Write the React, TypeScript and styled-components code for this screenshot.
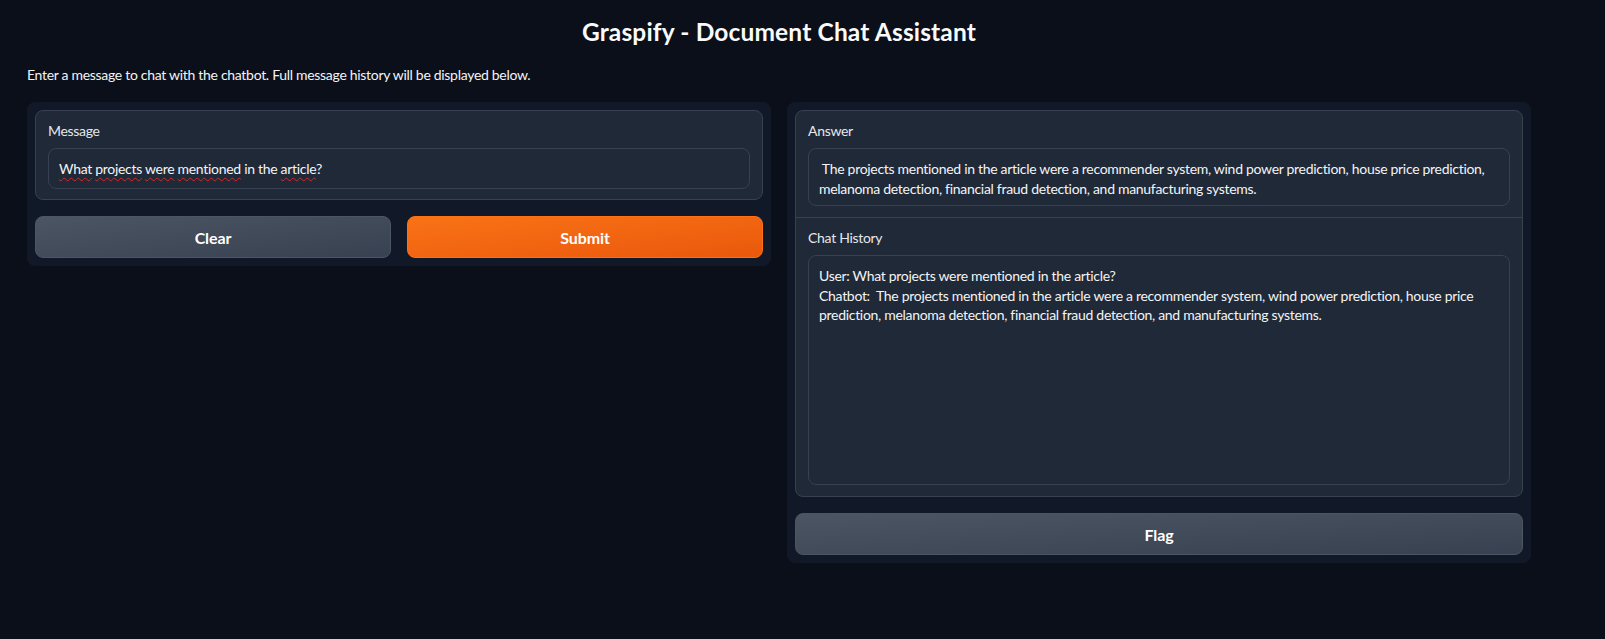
import React from "react";
import styled, { createGlobalStyle } from "styled-components";

const GlobalStyle = createGlobalStyle`
  *, *::before, *::after { box-sizing: border-box; }
  html, body { margin: 0; padding: 0; background: #0b0f19; }
  body {
    font-family: "Lato", "Liberation Sans", sans-serif;
    color: #f3f4f6;
    letter-spacing: -0.3px;
    -webkit-font-smoothing: antialiased;
  }
`;

const Page = styled.div`
  width: 1504px;
  margin-left: 27px;
  padding-top: 15px;
`;

const Title = styled.h1`
  margin: 0;
  font-size: 24.5px;
  font-weight: 700;
  line-height: 33px;
  letter-spacing: 0.15px;
  text-align: center;
  color: #f9fafb;
`;

const Description = styled.p`
  margin: 17px 0 0;
  font-size: 14px;
  line-height: 20px;
  color: #f3f4f6;
`;

const Row = styled.div`
  margin-top: 17px;
  display: flex;
  gap: 16px;
  align-items: flex-start;
`;

const Panel = styled.div`
  flex: 1 1 0;
  min-width: 0;
  background: #111827;
  border-radius: 8px;
  padding: 8px;
  display: flex;
  flex-direction: column;
  gap: 16px;
`;

const Box = styled.div`
  background: #1f2937;
  border: 1px solid #374151;
  border-radius: 8px;
`;

const Section = styled.div<{ $pb?: number }>`
  padding: 10px 12px ${(p) => p.$pb ?? 10}px;
  & + & {
    border-top: 1px solid #374151;
  }
`;

const Label = styled.div`
  font-size: 14px;
  line-height: 20px;
  color: #e5e7eb;
  margin-bottom: 7px;
`;

const Field = styled.div<{ $h: number }>`
  height: ${(p) => p.$h}px;
  background: #1f2937;
  border: 1px solid #374151;
  border-radius: 8px;
  padding: 10px;
  font-size: 14px;
  line-height: 19.6px;
  color: #f3f4f6;
  white-space: pre;
  overflow: hidden;
`;

const Misspelled = styled.span`
  text-decoration: underline wavy #dc2626;
  text-decoration-thickness: 1px;
  text-underline-offset: 3px;
  text-decoration-skip-ink: none;
`;

const ButtonRow = styled.div`
  display: grid;
  grid-template-columns: 1fr 1fr;
  gap: 16px;
`;

const Button = styled.button<{ $variant: "primary" | "secondary" }>`
  height: 42px;
  border-radius: 8px;
  border: 1px solid
    ${(p) => (p.$variant === "primary" ? "#f97316" : "#4b5563")};
  background: ${(p) =>
    p.$variant === "primary"
      ? "linear-gradient(to bottom right, #f97316, #ea580c)"
      : "linear-gradient(to bottom right, #4b5563, #374151)"};
  color: #ffffff;
  font-family: inherit;
  font-size: 16px;
  font-weight: 700;
  letter-spacing: -0.1px;
  cursor: pointer;
`;

export default function App() {
  return (
    <>
      <GlobalStyle />
      <Page>
        <Title>Graspify - Document Chat Assistant</Title>
        <Description>
          Enter a message to chat with the chatbot. Full message history will be
          displayed below.
        </Description>
        <Row>
          <Panel>
            <Box>
              <Section>
                <Label>Message</Label>
                <Field $h={41}>
                  <Misspelled>What</Misspelled> <Misspelled>projects</Misspelled>{" "}
                  <Misspelled>were</Misspelled> <Misspelled>mentioned</Misspelled>{" "}
                  in the <Misspelled>article</Misspelled>?
                </Field>
              </Section>
            </Box>
            <ButtonRow>
              <Button $variant="secondary">Clear</Button>
              <Button $variant="primary">Submit</Button>
            </ButtonRow>
          </Panel>
          <Panel>
            <Box>
              <Section $pb={11}>
                <Label>Answer</Label>
                <Field $h={58}>
                  {
                    " The projects mentioned in the article were a recommender system, wind power prediction, house price prediction,\nmelanoma detection, financial fraud detection, and manufacturing systems."
                  }
                </Field>
              </Section>
              <Section $pb={11}>
                <Label>Chat History</Label>
                <Field $h={230}>
                  {
                    "User: What projects were mentioned in the article?\nChatbot:  The projects mentioned in the article were a recommender system, wind power prediction, house price\nprediction, melanoma detection, financial fraud detection, and manufacturing systems."
                  }
                </Field>
              </Section>
            </Box>
            <Button $variant="secondary">Flag</Button>
          </Panel>
        </Row>
      </Page>
    </>
  );
}
